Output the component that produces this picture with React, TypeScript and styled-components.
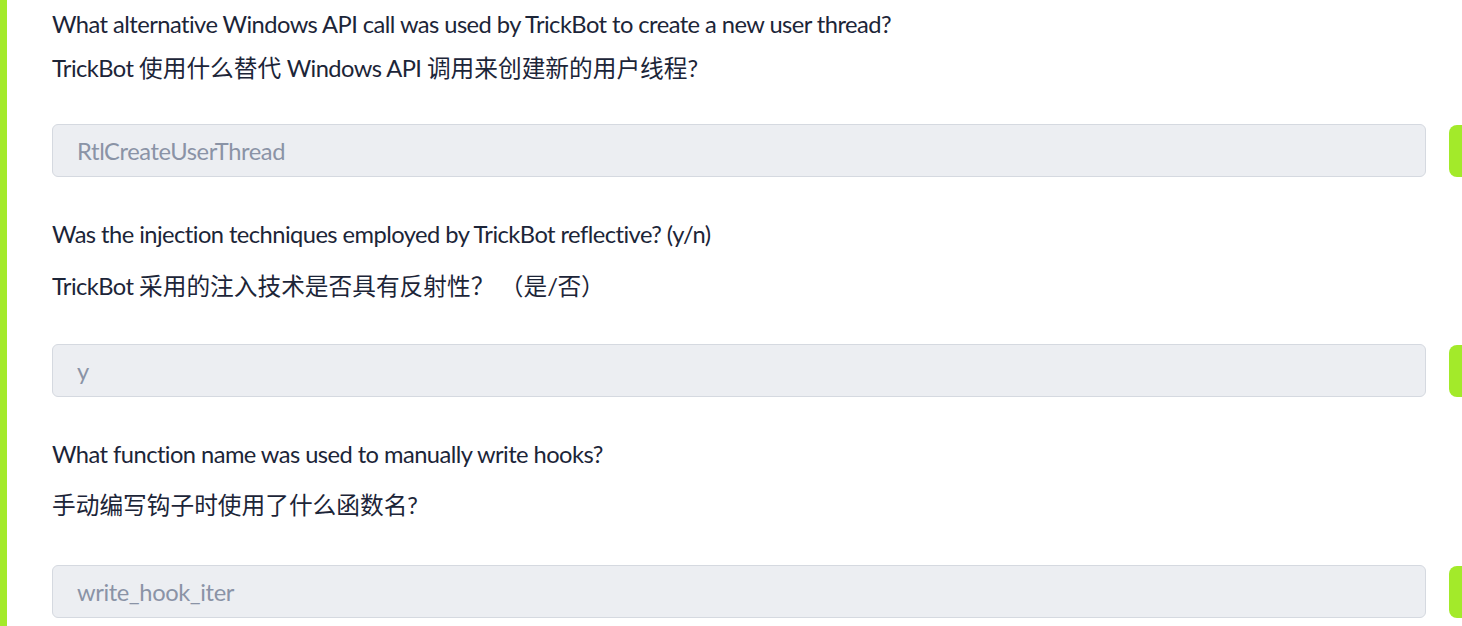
import React from "react";
import styled, { createGlobalStyle } from "styled-components";

const Global = createGlobalStyle`
  html, body { margin: 0; padding: 0; background: #ffffff; }
  body { font-family: Lato, "Noto Sans CJK SC", sans-serif; }
`;

const Page = styled.div`
  width: 1462px;
  height: 626px;
  overflow: hidden;
  box-sizing: border-box;
  border-left: 7px solid #a3ea2a;
  padding-left: 45px;
  display: flex;
  flex-direction: column;
`;

const Question = styled.section<{ $top: number }>`
  display: flex;
  flex-direction: column;
  padding-top: ${(p) => p.$top}px;
`;

const English = styled.p`
  margin: 0;
  font-family: Lato, "Noto Sans CJK SC", sans-serif;
  font-size: 23.7px;
  letter-spacing: -0.55px;
  line-height: 30px;
  color: #1c2538;
  white-space: nowrap;
`;

const Chinese = styled.p<{ $gap: number }>`
  margin: ${(p) => p.$gap}px 0 0;
  font-family: Lato, "Noto Sans CJK SC", sans-serif;
  font-size: 23.7px;
  letter-spacing: -0.55px;
  line-height: 30px;
  color: #1c2538;
  white-space: nowrap;
`;

const Han = styled.span`
  letter-spacing: 0;
`;

const AnswerRow = styled.div<{ $gap: number }>`
  display: flex;
  align-items: flex-start;
  gap: 23px;
  margin-top: ${(p) => p.$gap}px;
`;

const Input = styled.div`
  box-sizing: border-box;
  width: 1374px;
  height: 53px;
  flex-shrink: 0;
  background: #eceef2;
  border: 1px solid #d5d9e0;
  border-radius: 6px;
  padding-left: 24px;
  display: flex;
  align-items: center;
  font-family: Lato, sans-serif;
  font-size: 23.7px;
  letter-spacing: -0.4px;
  color: #8a93a6;
`;

const Submit = styled.div`
  width: 40px;
  height: 52px;
  margin-top: 1px;
  flex-shrink: 0;
  background: #a3ea2a;
  border-radius: 8px;
`;

const items = [
  {
    top: 9,
    en: "What alternative Windows API call was used by TrickBot to create a new user thread?",
    zh: "TrickBot 使用什么替代 Windows API 调用来创建新的用户线程?",
    gap: 14,
    inGap: 41,
    answer: "RtlCreateUserThread",
  },
  {
    top: 42,
    en: "Was the injection techniques employed by TrickBot reflective? (y/n)",
    zh: "TrickBot 采用的注入技术是否具有反射性？ （是/否）",
    gap: 22,
    inGap: 43,
    answer: "y",
  },
  {
    top: 42,
    en: "What function name was used to manually write hooks?",
    zh: "手动编写钩子时使用了什么函数名?",
    gap: 21,
    inGap: 45,
    answer: "write_hook_iter",
  },
];

function splitHan(text: string) {
  return text
    .split(/([\u3000-\u9fff\uff00-\uffef]+)/)
    .filter(Boolean)
    .map((part, i) =>
      /[\u3000-\u9fff\uff00-\uffef]/.test(part) ? <Han key={i}>{part}</Han> : <React.Fragment key={i}>{part}</React.Fragment>
    );
}

export default function App() {
  return (
    <>
      <Global />
      <Page>
        {items.map((q, i) => (
          <Question key={i} $top={q.top}>
            <English>{q.en}</English>
            <Chinese $gap={q.gap}>{splitHan(q.zh)}</Chinese>
            <AnswerRow $gap={q.inGap}>
              <Input>{q.answer}</Input>
              <Submit />
            </AnswerRow>
          </Question>
        ))}
      </Page>
    </>
  );
}
